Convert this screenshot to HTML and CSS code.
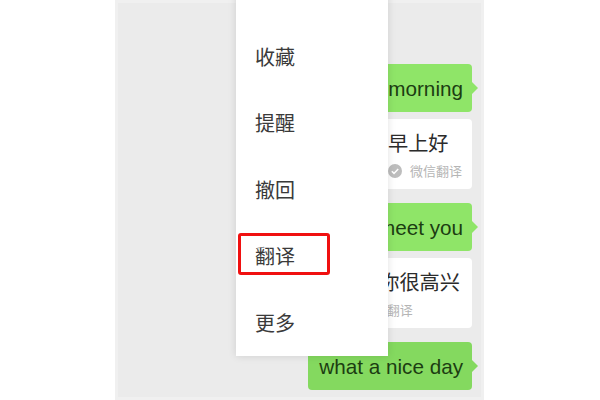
FILE: index.html
```html
<!DOCTYPE html>
<html lang="zh-CN">
<head>
    <meta charset="UTF-8">
    <meta name="viewport" content="width=device-width, initial-scale=1.0">
    <title>翻译</title>
    <link rel="stylesheet" href="styles.css">
</head>
<body>
    <div class="phone">
        <div class="chat">
            <div class="bubble bubble-first">Good morning</div>
            <div class="card">
                <div class="card-text">早上好</div>
                <div class="card-note">
                    <svg class="check" width="14" height="14" viewBox="0 0 14 14">
                        <circle cx="7" cy="7" r="7" fill="#bdbdbd"/>
                        <path d="M3.8 7.2 L6 9.4 L10.2 5" fill="none" stroke="#fff" stroke-width="1.5"/>
                    </svg>
                    <span>微信翻译</span>
                </div>
            </div>
            <div class="bubble bubble-next">Nice to meet you</div>
            <div class="card">
                <div class="card-text">见到你很高兴</div>
                <div class="card-note">
                    <svg class="check" width="14" height="14" viewBox="0 0 14 14">
                        <circle cx="7" cy="7" r="7" fill="#bdbdbd"/>
                        <path d="M3.8 7.2 L6 9.4 L10.2 5" fill="none" stroke="#fff" stroke-width="1.5"/>
                    </svg>
                    <span>微信翻译</span>
                </div>
            </div>
            <div class="bubble bubble-next bubble-last">what a nice day</div>
        </div>

        <ul class="menu">
            <li class="menu-item">收藏</li>
            <li class="menu-item">提醒</li>
            <li class="menu-item">撤回</li>
            <li class="menu-item menu-item-marked">翻译</li>
            <li class="menu-item">更多</li>
        </ul>
    </div>
</body>
</html>
```

FILE: styles.css
```css
html, body {
    height: 100%;
}

body {
    margin: 0;
    background-color: #fff;
    font-family: "Liberation Sans", "Noto Sans CJK SC", sans-serif;
    display: flex;
    justify-content: center;
    overflow: hidden;
}

.phone {
    position: relative;
    width: 369px;
    height: 400px;
    margin-right: 1px;
    background-color: #ebebeb;
    box-shadow: inset 0 0 0 3px #f0f0f0;
    overflow: hidden;
}

.chat {
    display: flex;
    flex-direction: column;
    align-items: flex-end;
    padding: 64px 12px 0 0;
}

.bubble {
    position: relative;
    height: 48px;
    line-height: 49px;
    padding: 0 9px 0 11px;
    background-color: #8fe568;
    border-radius: 4px;
    color: #1c3d12;
    font-size: 20.7px;
    white-space: nowrap;
}

.bubble::after {
    content: "";
    position: absolute;
    top: 18px;
    right: -6px;
    border-left: 6px solid #8fe568;
    border-top: 6px solid transparent;
    border-bottom: 6px solid transparent;
}

.bubble-next {
    margin-top: 14px;
}

.bubble-last {
    background-color: #84d95f;
}

.bubble-last::after {
    border-left-color: #84d95f;
}

.card {
    box-sizing: border-box;
    height: 70px;
    margin-top: 7px;
    padding: 11px 12px 0;
    background-color: #fff;
    border-radius: 4px;
}

.card-text {
    font-size: 20.2px;
    line-height: 28px;
    color: #2b2b2b;
}

.card-note {
    display: flex;
    align-items: center;
    gap: 8px;
    margin: 3px -2px 0 0;
    font-size: 13px;
    color: #b5b5b5;
}

.check {
    flex: none;
}

.menu {
    position: absolute;
    top: -10px;
    left: 121px;
    width: 152px;
    height: 366px;
    box-sizing: border-box;
    margin: 0;
    padding: 45px 0 0;
    list-style: none;
    background-color: #fff;
    box-shadow: 0 0 8px rgba(0, 0, 0, 0.12);
}

.menu-item {
    position: relative;
    height: 66.4px;
    line-height: 46px;
    padding-left: 19px;
    font-size: 20px;
    color: #3a3a3a;
}

.menu-item-marked::after {
    content: "";
    position: absolute;
    top: -1px;
    left: 2px;
    width: 86px;
    height: 36px;
    border: 3px solid #f01010;
    border-radius: 3px;
}
```
